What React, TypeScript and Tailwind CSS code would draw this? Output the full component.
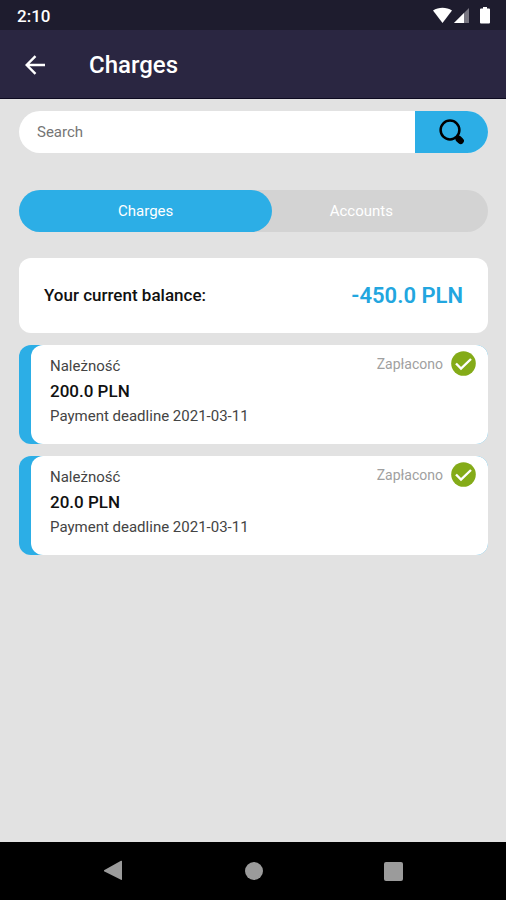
const charges = [
  { id: 1, title: "Należność", amount: "200.0 PLN", deadline: "2021-03-11", status: "Zapłacono" },
  { id: 2, title: "Należność", amount: "20.0 PLN", deadline: "2021-03-11", status: "Zapłacono" },
];

function StatusBar() {
  return (
    <div className="flex h-[30px] items-center justify-between bg-[#1e1c2e] pr-4 pl-[17px] text-white">
      <span className="pt-0.5 text-[17px] leading-6 font-medium">2:10</span>
      <svg width="58" height="18" viewBox="0 0 58 18" fill="#fff" aria-hidden="true">
        <path d="M1 4.600C6.500.8 14.500.8 20 4.600L10.500 17z" />
        <path d="M37 2v15H22z" fillOpacity="0.4" />
        <path d="M32 7v10H22z" />
        <path d="M49 2.500h2V1h4v1.500h2q1 0 1 1v13q0 1-1 1h-8q-1 0-1-1v-13q0-1 1-1z" />
      </svg>
    </div>
  );
}

function Header() {
  return (
    <header className="flex h-[69px] items-center border-b border-[#0d0a20] bg-[#2a2641] px-6 pt-0.5 text-white">
      <button type="button" aria-label="Back" className="mr-[43px]">
        <svg width="22" height="20" viewBox="0 0 22 20" fill="none" stroke="#fff" strokeWidth="2.400" aria-hidden="true">
          <path d="M21 10H3M11.500 1.200 2.700 10l8.800 8.800" />
        </svg>
      </button>
      <h1 className="text-2xl font-medium">Charges</h1>
    </header>
  );
}

function SearchBar() {
  return (
    <form className="flex h-[42px] overflow-hidden rounded-full bg-white" onSubmit={(e) => e.preventDefault()}>
      <input
        type="text"
        aria-label="Search"
        placeholder="Search"
        className="min-w-0 flex-1 px-[18px] text-[15px] text-gray-800 outline-none placeholder:text-[#757575]"
      />
      <button type="submit" aria-label="Submit search" className="flex w-[73px] items-center justify-center bg-[#2caee6]">
        <svg width="26" height="26" viewBox="0 0 26 26" fill="none" stroke="#000" aria-hidden="true">
          <circle cx="11" cy="11" r="9.400" strokeWidth="2.500" />
          <path d="M17.500 17.500 20 20" strokeWidth="2.800" />
          <path d="m19.700 20 2 1.800" strokeWidth="6.400" strokeLinecap="round" />
        </svg>
      </button>
    </form>
  );
}

function Tabs() {
  return (
    <div className="mt-[37px] flex h-[42px] rounded-full bg-[#d3d3d3] text-[15px] text-white">
      <button type="button" className="z-10 w-[54%] rounded-full bg-[#2caee6]">
        Charges
      </button>
      <button type="button" className="-ml-[8%] w-[54%] rounded-full">
        Accounts
      </button>
    </div>
  );
}

function PaidIcon() {
  return (
    <svg width="25" height="25" viewBox="0 0 25 25" aria-hidden="true">
      <circle cx="12.500" cy="12.500" r="12.300" fill="#84ab18" />
      <path d="m5 12.500 5 5L20 8" fill="none" stroke="#fff" strokeWidth="2.400" />
    </svg>
  );
}

export default function App() {
  return (
    <div className="flex min-h-screen flex-col bg-[#e2e2e2] font-[Roboto,sans-serif]">
      <StatusBar />
      <Header />
      <main className="flex-1 pt-3 pr-[18px] pl-[19px]">
        <SearchBar />
        <Tabs />
        <section className="mt-[26px] flex h-[75px] items-center justify-between rounded-xl bg-white px-[25px]">
          <h2 className="text-[17px] font-medium text-[#111]">Your current balance:</h2>
          <span className="text-[22px] font-semibold text-[#22a6df]">-450.0 PLN</span>
        </section>
        <ul>
          {charges.map((charge) => (
            <li key={charge.id} className="mt-3 rounded-xl bg-[#2caee6] pl-3">
              <div className="flex items-start justify-between rounded-xl bg-white pt-1.5 pr-3 pb-[15px] pl-[19px]">
                <div className="pt-[3px] text-[15px] leading-[25px] text-[#444]">
                  <p>{charge.title}</p>
                  <p className="text-[17px] leading-[25px] font-medium text-[#111]">{charge.amount}</p>
                  <p>Payment deadline {charge.deadline}</p>
                </div>
                <div className="flex items-center gap-2 text-sm text-[#a0a0a0]">
                  <span>{charge.status}</span>
                  <PaidIcon />
                </div>
              </div>
            </li>
          ))}
        </ul>
      </main>
      <nav className="flex h-[58px] items-center justify-around bg-black px-[43px]">
        <button type="button" aria-label="Back">
          <svg width="20" height="22" viewBox="0 0 20 22" fill="#9b9b9b" aria-hidden="true">
            <path d="M0 10.300 17 .8q1-.5 1 .5v18q0 1-1 .5L0 11.300q-.8-.5 0-1z" />
          </svg>
        </button>
        <button type="button" aria-label="Home">
          <span className="block size-[18px] rounded-full bg-[#9b9b9b]" />
        </button>
        <button type="button" aria-label="Recent apps">
          <span className="block size-[19px] rounded-[2px] bg-[#9b9b9b]" />
        </button>
      </nav>
    </div>
  );
}
